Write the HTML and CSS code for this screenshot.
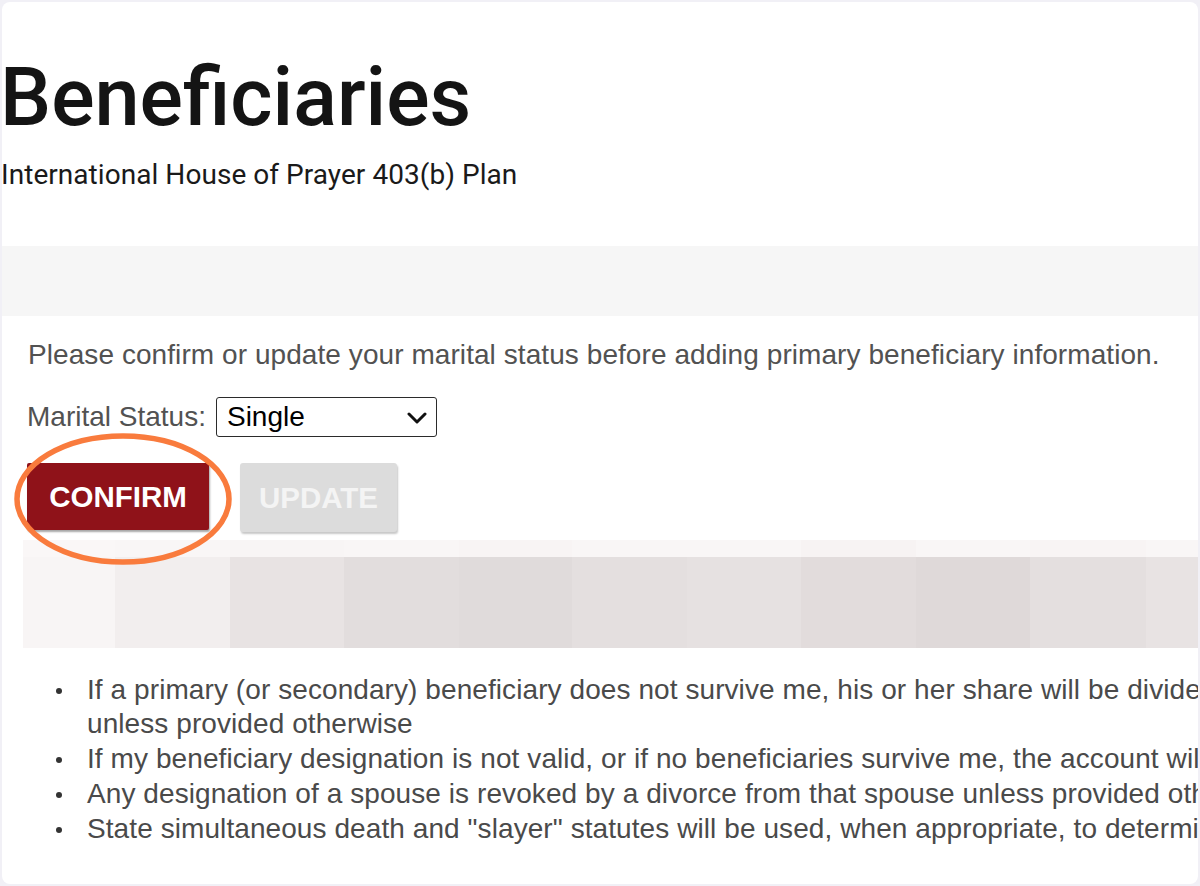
FILE: index.html
```html
<!DOCTYPE html>
<html lang="en">
<head>
<meta charset="utf-8">
<title>Beneficiaries</title>
<link rel="stylesheet" href="styles.css">
</head>
<body>
<main class="card">
  <header class="page-head">
    <h1 class="title">Beneficiaries</h1>
    <p class="plan">International House of Prayer 403(b) Plan</p>
  </header>
  <div class="band"></div>
  <section class="content">
    <p class="note">Please confirm or update your marital status before adding primary beneficiary information.</p>
    <div class="status-row">
      <label class="status-label">Marital Status:</label>
      <div class="select">
        <span class="select-value">Single</span>
        <svg class="chevron" width="20" height="12" viewBox="0 0 20 12"><path d="M2 2 L10 10 L18 2" fill="none" stroke="#111" stroke-width="3" stroke-linecap="round" stroke-linejoin="round"/></svg>
      </div>
    </div>
    <div class="actions">
      <button class="btn btn-confirm">CONFIRM</button>
      <button class="btn btn-update" disabled>UPDATE</button>
      <svg class="highlight" width="222" height="136" viewBox="0 0 222 136"><ellipse cx="111" cy="68" rx="106" ry="63" fill="none" stroke="#f97b3d" stroke-width="5.5"/></svg>
    </div>
    <div class="blur-table">
      <div class="row row-head">
        <span></span><span></span><span></span><span></span><span></span><span></span><span></span><span></span><span></span><span></span><span></span>
      </div>
      <div class="row row-body">
        <span></span><span></span><span></span><span></span><span></span><span></span><span></span><span></span><span></span><span></span><span></span>
      </div>
    </div>
    <ul class="rules">
      <li>If a primary (or secondary) beneficiary does not survive me, his or her share will be divided equally among the remaining beneficiaries<br>unless provided otherwise</li>
      <li>If my beneficiary designation is not valid, or if no beneficiaries survive me, the account will be paid to my estate</li>
      <li>Any designation of a spouse is revoked by a divorce from that spouse unless provided otherwise</li>
      <li>State simultaneous death and "slayer" statutes will be used, when appropriate, to determine beneficiaries</li>
    </ul>
  </section>
</main>
</body>
</html>
```

FILE: styles.css
```css
* { box-sizing: border-box; }
html, body { margin: 0; padding: 0; }
body {
  background: #f1f0f6;
  width: 1200px;
  height: 886px;
  padding: 2px;
}
.card {
  background: #ffffff;
  border-radius: 8px;
  height: 882px;
  overflow: hidden;
  position: relative;
}
.page-head {
  padding-top: 48px;
}
.title {
  margin: 0 0 0 -2px;
  font-family: Roboto, "Liberation Sans", sans-serif;
  font-weight: 500;
  font-size: 81px;
  line-height: 96px;
  color: #141414;
}
.plan {
  margin: 14px 0 0 -1px;
  font-family: Roboto, "Liberation Sans", sans-serif;
  font-size: 28px;
  line-height: 30px;
  color: #1a1a1a;
  letter-spacing: 0.05px;
}
.band {
  margin-top: 56px;
  height: 70px;
  background: #f6f6f6;
}
.content {
  padding-left: 25px;
  font-family: "Liberation Sans", Arial, sans-serif;
  font-size: 28px;
  color: #525252;
}
.note {
  margin: 23px 0 0 1px;
  line-height: 32px;
  white-space: nowrap;
  letter-spacing: 0.07px;
}
.status-row {
  margin-top: 26px;
  display: flex;
  align-items: center;
  gap: 10px;
}
.status-label {
  line-height: 32px;
}
.select {
  width: 221px;
  height: 40px;
  border: 1px solid #2b2b2b;
  border-radius: 3px;
  display: flex;
  align-items: center;
  justify-content: space-between;
  padding: 0 9px 0 10px;
  color: #000;
  background: #fff;
}
.select-value { line-height: 32px; }
.chevron { display: block; margin-top: 2px; }
.actions {
  position: relative;
  margin-top: 26px;
  display: flex;
  gap: 31px;
  align-items: flex-start;
}
.btn {
  font-family: "Liberation Sans", Arial, sans-serif;
  font-weight: 700;
  font-size: 29.5px;
  height: 67px;
  border: none;
  border-radius: 2px;
  padding: 0;
  cursor: pointer;
}
.btn-confirm {
  width: 182px;
  background: #8f1219;
  color: #ffffff;
  box-shadow: 1px 2px 2px rgba(0, 0, 0, 0.35);
}
.btn-update {
  width: 157px;
  height: 69px;
  background: #dcdcdc;
  color: #f4f4f4;
  box-shadow: 1px 2px 2px rgba(0, 0, 0, 0.22);
  border-radius: 3px;
}
.highlight {
  position: absolute;
  left: -15px;
  top: -32px;
  pointer-events: none;
}
.blur-table {
  margin: 8px 0 0 -4px;
  width: 1260px;
}
.row {
  display: grid;
  grid-template-columns: 92px 115px 114px 115px 113px 115px 114px 115px 114px 116px 114px;
}
.row-head { height: 17px; }
.row-body { height: 91px; }
.row-head span { background: #f9f6f6; }
.row-head span:nth-child(1) { background: #faf7f7; }
.row-head span:nth-child(3) { background: #f8f5f5; }
.row-head span:nth-child(5) { background: #f8f4f4; }
.row-head span:nth-child(8) { background: #f7f3f3; }
.row-head span:nth-child(10) { background: #f8f4f4; }
.row-body span:nth-child(1) { background: #f8f5f5; }
.row-body span:nth-child(2) { background: #f2eeee; }
.row-body span:nth-child(3) { background: #e8e3e3; }
.row-body span:nth-child(4) { background: #e2dddd; }
.row-body span:nth-child(5) { background: #e0dbdb; }
.row-body span:nth-child(6) { background: #e4dfdf; }
.row-body span:nth-child(7) { background: #e6e1e1; }
.row-body span:nth-child(8) { background: #e2dcdc; }
.row-body span:nth-child(9) { background: #dfd9d9; }
.row-body span:nth-child(10) { background: #e4dfdf; }
.row-body span:nth-child(11) { background: #e8e3e3; }
.rules {
  margin: 25px 0 0 0;
  padding-left: 60px;
  line-height: 34px;
  color: #4a4a4a;
  white-space: nowrap;
  list-style: none;
  letter-spacing: 0.08px;
}
.rules li { position: relative; }
.rules li + li { margin-top: 1px; }
.rules li::before {
  content: "";
  position: absolute;
  left: -31px;
  top: 15px;
  width: 6px;
  height: 6px;
  border-radius: 50%;
  background: #333333;
}
```
